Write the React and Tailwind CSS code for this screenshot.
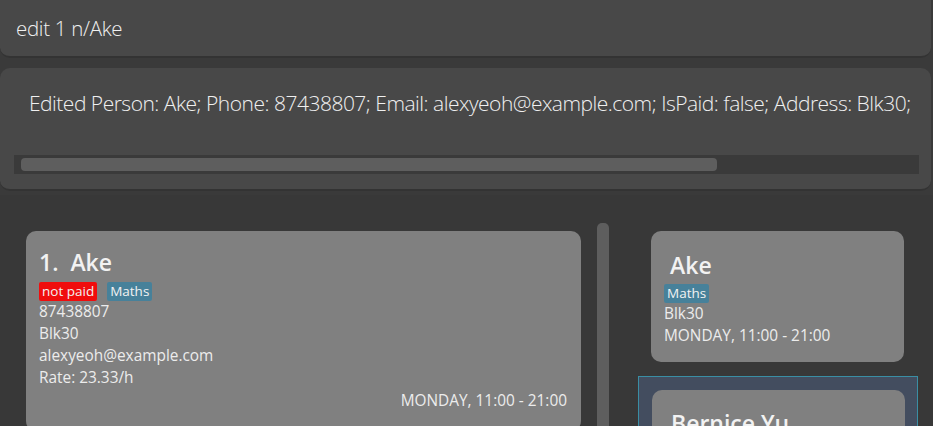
import React from 'react';

const Tag = ({ children, color }) => (
  <span className={`${color} text-[#f2f2f2] text-[13.5px] leading-[19px] px-[3px] rounded-[2px]`}>{children}</span>
);

const App = () => {
  return (
    <div className="w-[933px] h-[426px] overflow-hidden bg-[#3a3a3a] flex flex-col font-['Open_Sans',sans-serif]">
      {/* Command box */}
      <div className="h-[58px] w-[931px] bg-[#484848] rounded-b-[10px] flex items-center pl-[16px] shrink-0 border-b-2 border-[#333333]">
        <span className="text-[20.5px] text-[#f0f0f0] font-light tracking-[-0.3px]">edit 1 n/Ake</span>
      </div>

      {/* Result display */}
      <div className="mt-[10px] h-[123px] w-[931px] bg-[#484848] rounded-[10px] shrink-0 flex flex-col border-b-2 border-[#333333]">
        <div className="pl-[29px] pt-[20px] h-[87px] text-[21px] leading-[30px] text-[#f0f0f0] font-light whitespace-nowrap tracking-[-0.5px]">
          Edited Person: Ake; Phone: 87438807; Email: alexyeoh@example.com; IsPaid: false; Address: Blk30;
        </div>
        <div className="ml-[14px] w-[905px] h-[19px] bg-[#3a3a3a] flex items-center pl-[7px]">
          <div className="w-[696px] h-[13px] bg-[#5e5e5e] rounded-[4px]"></div>
        </div>
      </div>

      {/* Bottom area */}
      <div className="flex-1 bg-[#383838] mt-[4px] flex">
        {/* Person list */}
        <div className="pl-[26px] pt-[36px]">
          <div className="w-[555px] h-[200px] bg-[#808080] rounded-[10px] pl-[13px] pr-[14px] pt-[15px] flex flex-col">
            <div className="text-[23px] leading-[32px] font-semibold text-[#f2f2f2]">1.&nbsp; Ake</div>
            <div className="flex gap-[10px] mt-[4px]">
              <Tag color="bg-[#f00d0d]">not paid</Tag>
              <Tag color="bg-[#47819a]">Maths</Tag>
            </div>
            <div className="text-[15.4px] leading-[22px] text-[#ececec]">
              <div>87438807</div>
              <div>Blk30</div>
              <div>alexyeoh@example.com</div>
              <div>Rate: 23.33/h</div>
            </div>
            <div className="text-[15.4px] leading-[22px] text-[#ececec] text-right mt-[1px]">MONDAY, 11:00 - 21:00</div>
          </div>
        </div>

        {/* Vertical scrollbar */}
        <div className="ml-[16px] pt-[28px]">
          <div className="w-[12px] h-[220px] bg-[#5e5e5e] rounded-t-[5px]"></div>
        </div>

        {/* Schedule panel */}
        <div className="ml-[29px] pt-[36px] flex flex-col">
          <div className="ml-[13px] w-[253px] h-[131px] bg-[#808080] rounded-[10px] pl-[13px] pt-[19px] flex flex-col">
            <div className="text-[23px] leading-[30px] font-semibold text-[#f2f2f2] pl-[6px]">Ake</div>
            <div className="flex mt-[4px]">
              <Tag color="bg-[#47819a]">Maths</Tag>
            </div>
            <div className="text-[15.4px] leading-[22px] text-[#ececec]">
              <div>Blk30</div>
              <div>MONDAY, 11:00 - 21:00</div>
            </div>
          </div>
          <div className="mt-[14px] w-[280px] h-[100px] bg-[#434d5f] border border-[#3a8ea4] pl-[13px] pt-[13px]">
            <div className="w-[253px] h-[100px] bg-[#808080] rounded-[10px] pl-[19px] pt-[18px]">
              <div className="text-[23px] leading-[30px] font-semibold text-[#f2f2f2]">Bernice Yu</div>
            </div>
          </div>
        </div>
      </div>
    </div>
  );
};

export default App;
